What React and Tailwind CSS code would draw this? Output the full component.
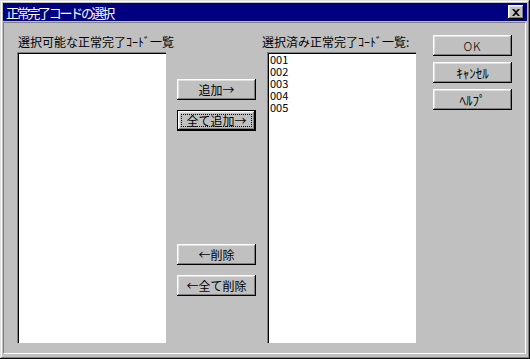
import React from "react";

const font = { fontFamily: '"Noto Sans CJK JP", "Liberation Sans", sans-serif' };

const Button = ({ children, primary, big }) => {
  const size = big ? "text-[13px]" : "text-[12px]";
  if (primary) {
    return (
      <div className="w-[79px] h-[21px] border border-black">
        <div className="w-full h-full bg-[#c0c0c0] shadow-[inset_-1px_-1px_#000,inset_1px_1px_#fff,inset_-2px_-2px_#808080,inset_2px_2px_#dfdfdf] p-[3px]">
          <div className={`w-full h-full border border-dotted border-black flex items-center justify-center ${size} leading-none text-black`}>
            {children}
          </div>
        </div>
      </div>
    );
  }
  return (
    <div className={`w-[79px] h-[21px] bg-[#c0c0c0] shadow-[inset_-1px_-1px_#000,inset_1px_1px_#fff,inset_-2px_-2px_#808080,inset_2px_2px_#dfdfdf] flex items-center justify-center ${size} leading-none text-black`}>
      {children}
    </div>
  );
};

const ListBox = ({ items }) => (
  <div className="w-[149px] h-[291px] bg-white shadow-[inset_1px_1px_#808080,inset_2px_2px_#000] pt-[1px] pl-[3px]">
    {items.map((it) => (
      <div key={it} className="text-[11px] leading-[12px] text-black">{it}</div>
    ))}
  </div>
);

export default function App() {
  const selected = ["001", "002", "003", "004", "005"];

  return (
    <div style={font} className="w-[530px] h-[359px] bg-[#c0c0c0] p-[3px] shadow-[inset_-1px_-1px_#0a0a0a,inset_1px_1px_#dfdfdf,inset_-2px_-2px_#808080,inset_2px_2px_#fff] overflow-hidden">
      {/* title bar */}
      <div className="h-[18px] w-[524px] bg-[#000080] flex items-center justify-between pl-[3px] pr-[3px]">
        <span className="text-white text-[13px] leading-none tracking-[-2.3px]">正常完了コードの選択</span>
        <div className="w-[16px] h-[14px] bg-[#c0c0c0] shadow-[inset_-1px_-1px_#000,inset_1px_1px_#fff,inset_-2px_-2px_#808080,inset_2px_2px_#dfdfdf] flex items-center justify-center">
          <svg width="8" height="7" viewBox="0 0 8 7">
            <path d="M0 0h2l2 2 2-2h2L5 3.5 8 7H6L4 5 2 7H0l3-3.5z" fill="#000" />
          </svg>
        </div>
      </div>

      {/* client panel */}
      <div className="mt-[1px] w-[523px] h-[332px] border border-t-[#808080] border-l-[#808080] border-b-white border-r-white flex items-start">
        <div className="ml-[13px] mt-[11px] w-[149px] shrink-0 flex flex-col">
          <div className="text-[12px] leading-[16px] text-black pl-[1px] whitespace-nowrap">選択可能な正常完了ｺｰﾄﾞ一覧</div>
          <div className="mt-[2px]">
            <ListBox items={[]} />
          </div>
        </div>

        <div className="ml-[11px] mt-[56px] w-[79px] shrink-0 flex flex-col">
          <Button>追加→</Button>
          <div className="mt-[10px]">
            <Button primary>全て追加→</Button>
          </div>
          <div className="mt-[113px]">
            <Button>←削除</Button>
          </div>
          <div className="mt-[10px]">
            <Button>←全て削除</Button>
          </div>
        </div>

        <div className="ml-[11px] mt-[11px] w-[149px] shrink-0 flex flex-col">
          <div className="text-[12px] leading-[16px] text-black -ml-[5px] whitespace-nowrap">選択済み正常完了ｺｰﾄﾞ一覧:</div>
          <div className="mt-[2px]">
            <ListBox items={selected} />
          </div>
        </div>

        <div className="ml-[17px] mt-[12px] w-[79px] shrink-0 flex flex-col gap-[6px]">
          <Button>
            <span className="tracking-[1px] font-light">OK</span>
          </Button>
          <Button big>ｷｬﾝｾﾙ</Button>
          <Button big>ﾍﾙﾌﾟ</Button>
        </div>
      </div>
    </div>
  );
}
